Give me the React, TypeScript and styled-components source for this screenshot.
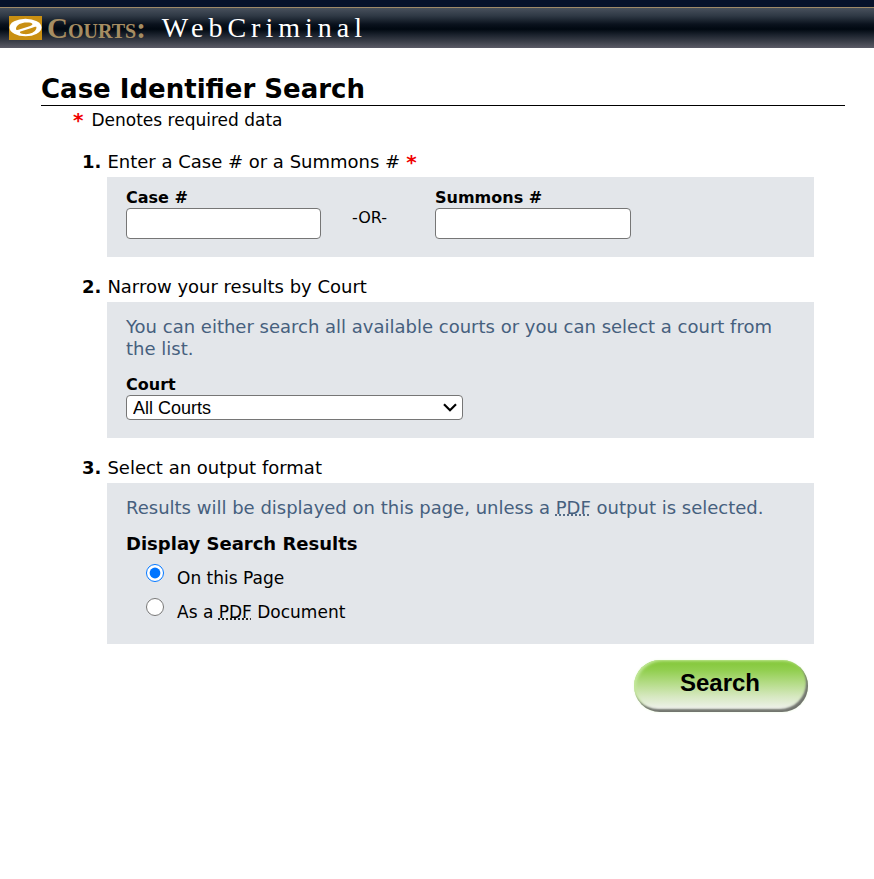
import React, { useState } from "react";
import styled, { createGlobalStyle } from "styled-components";

const GlobalStyle = createGlobalStyle`
  *, *::before, *::after { box-sizing: border-box; }
  body {
    margin: 0;
    background: #fff;
    color: #000;
    font-family: Verdana, "DejaVu Sans", sans-serif;
    font-size: 17px;
  }
`;

const Banner = styled.header`
  display: flex;
  align-items: center;
  height: 48px;
  padding: 1px 9px 0;
  border-top: 7px solid #07122b;
  background: linear-gradient(#a08a68 0 1px, #48505c 1px, #2e3844 22%, #0a121d 42%, #000811 54%, #1b222d 68%, #3b3f49 84%, #5b5b66);
  font-family: "Liberation Serif", "Times New Roman", serif;
  white-space: nowrap;
`;

const Logo = styled.svg`
  flex: none;
  width: 33px;
  height: 24px;
`;

const Brand = styled.span`
  margin-left: 5px;
  color: #a68d62;
  font-size: 29px;
  line-height: 40px;
  font-weight: bold;
  font-variant: small-caps;
`;

const Product = styled.span`
  margin-left: 16px;
  color: #fff;
  font-size: 28px;
  line-height: 40px;
  letter-spacing: 5px;
`;

const Main = styled.main`
  padding: 26px 29px 40px 41px;
`;

const Title = styled.h1`
  margin: 0;
  border-bottom: 1px solid #000;
  font-size: 26px;
  line-height: 31px;
`;

const Note = styled.p`
  display: flex;
  gap: 8px;
  margin: 0 0 0 32px;
  line-height: 29px;
`;

const Star = styled.span`
  color: #f00000;
  font-size: 20px;
  font-weight: bold;
`;

const Steps = styled.form`
  display: grid;
  gap: 19px;
  margin: 16px 31px 0 66px;
`;

const StepTitle = styled.h2`
  display: flex;
  gap: 6px;
  margin: 0 0 4px -25px;
  font-size: 18px;
  line-height: 22px;
  font-weight: normal;
`;

const Panel = styled.div`
  padding: 14px 19px 18px;
  background: #e3e6ea;
`;

const FieldRow = styled(Panel)`
  display: grid;
  grid-template-columns: 195px 114px 196px;
  padding-top: 10px;
`;

const Label = styled.label`
  display: block;
  font-size: 16px;
  line-height: 21px;
  font-weight: bold;
`;

const TextInput = styled.input`
  display: block;
  width: 100%;
  height: 31px;
  padding: 2px 6px;
  border: 1px solid #767676;
  border-radius: 4px;
  background: #fff;
  font: 18px "Liberation Sans", Arial, sans-serif;
`;

const Or = styled.span`
  padding: 20px 0 0 31px;
  font-size: 16px;
  line-height: 21px;
`;

const Hint = styled.p`
  margin: 0 0 14px;
  color: #46607e;
  font-size: 18px;
  line-height: 22px;
`;

const Abbr = styled.abbr`
  text-decoration: underline dotted;
`;

const SelectBox = styled.div`
  display: grid;
  width: 337px;
  max-width: 100%;
  align-items: center;

  > * { grid-area: 1 / 1; }
`;

const Select = styled.select`
  appearance: none;
  width: 100%;
  height: 25px;
  padding: 0 24px 0 6px;
  border: 1px solid #767676;
  border-radius: 4px;
  background: #fff;
  color: #000;
  font: 18px "Liberation Sans", Arial, sans-serif;
`;

const Chevron = styled.svg`
  justify-self: end;
  width: 14px;
  height: 9px;
  margin-right: 6px;
  pointer-events: none;
`;

const Choices = styled.fieldset`
  margin: 0;
  padding: 0 0 3px;
  border: 0;
`;

const Legend = styled.legend`
  padding: 0;
  font-size: 18px;
  line-height: 22px;
  font-weight: bold;
`;

const Choice = styled.label`
  display: flex;
  align-items: flex-end;
  gap: 13px;
  height: 34px;
  padding-left: 20px;
  line-height: 22px;
`;

const Radio = styled.input`
  width: 18px;
  height: 18px;
  margin: 0 0 7px;
`;

const Actions = styled.div`
  display: flex;
  justify-content: flex-end;
  margin: -3px 6px 0 0;
`;

const SearchButton = styled.button`
  width: 174px;
  height: 52px;
  padding: 0 2px 6px 0;
  border: 0;
  border-radius: 26px;
  background: linear-gradient(#82c636, #92cf50 20%, #b5dc88 45%, #d6e8c0 70%, #f0f2ed 95%);
  box-shadow: inset -2px -3px 2px #72756f, inset 2px 1px 3px #c4e99b, 0 0 3px #eefbe4;
  color: #000;
  font: bold 24px "Liberation Sans", Arial, sans-serif;
  cursor: pointer;
`;

export default function App() {
  const [format, setFormat] = useState("page");

  return (
    <>
      <GlobalStyle />
      <Banner>
        <Logo viewBox="0 0 33 24" aria-hidden="true">
          <rect width="33" height="24" fill="#c98f12" />
          <ellipse cx="16.5" cy="11.5" rx="16" ry="8.8" fill="#fff" />
          <path d="M7 12.5 C7.5 8 14 5.8 20 6.6 C25 7.2 24 9.4 20.5 10.2 L11 13.2 C8.5 14.2 7 14.5 7 12.5 Z" fill="#c98f12" />
          <path d="M11.5 15.4 L22.5 12 C26.5 10.8 28 9.8 27.3 12.5 C26 16.6 20 18.8 14.5 18 C10.8 17.4 10.3 15.9 11.5 15.4 Z" fill="#c98f12" />
        </Logo>
        <Brand>Courts:</Brand>
        <Product>WebCriminal</Product>
      </Banner>
      <Main>
        <Title>Case Identifier Search</Title>
        <Note>
          <Star>*</Star>
          <span>Denotes required data</span>
        </Note>
        <Steps onSubmit={(event) => event.preventDefault()}>
          <section>
            <StepTitle>
              <b>1.</b>
              <span>Enter a Case # or a Summons #</span>
              <Star>*</Star>
            </StepTitle>
            <FieldRow>
              <div>
                <Label htmlFor="case">Case #</Label>
                <TextInput id="case" type="text" />
              </div>
              <Or>-OR-</Or>
              <div>
                <Label htmlFor="summons">Summons #</Label>
                <TextInput id="summons" type="text" />
              </div>
            </FieldRow>
          </section>
          <section>
            <StepTitle>
              <b>2.</b>
              <span>Narrow your results by Court</span>
            </StepTitle>
            <Panel>
              <Hint>
                You can either search all available courts or you can select a court from the list.
              </Hint>
              <Label htmlFor="court">Court</Label>
              <SelectBox>
                <Select id="court">
                  <option>All Courts</option>
                </Select>
                <Chevron viewBox="0 0 14 9" aria-hidden="true">
                  <path d="M1 1.2 L7 7.2 L13 1.2" fill="none" stroke="#000" strokeWidth="2.2" />
                </Chevron>
              </SelectBox>
            </Panel>
          </section>
          <section>
            <StepTitle>
              <b>3.</b>
              <span>Select an output format</span>
            </StepTitle>
            <Panel>
              <Hint>
                Results will be displayed on this page, unless a{" "}
                <Abbr title="Portable Document Format">PDF</Abbr> output is selected.
              </Hint>
              <Choices>
                <Legend>Display Search Results</Legend>
                <Choice>
                  <Radio
                    type="radio"
                    name="format"
                    checked={format === "page"}
                    onChange={() => setFormat("page")}
                  />
                  <span>On this Page</span>
                </Choice>
                <Choice>
                  <Radio
                    type="radio"
                    name="format"
                    checked={format === "pdf"}
                    onChange={() => setFormat("pdf")}
                  />
                  <span>
                    As a <Abbr title="Portable Document Format">PDF</Abbr> Document
                  </span>
                </Choice>
              </Choices>
            </Panel>
          </section>
          <Actions>
            <SearchButton type="submit">Search</SearchButton>
          </Actions>
        </Steps>
      </Main>
    </>
  );
}
